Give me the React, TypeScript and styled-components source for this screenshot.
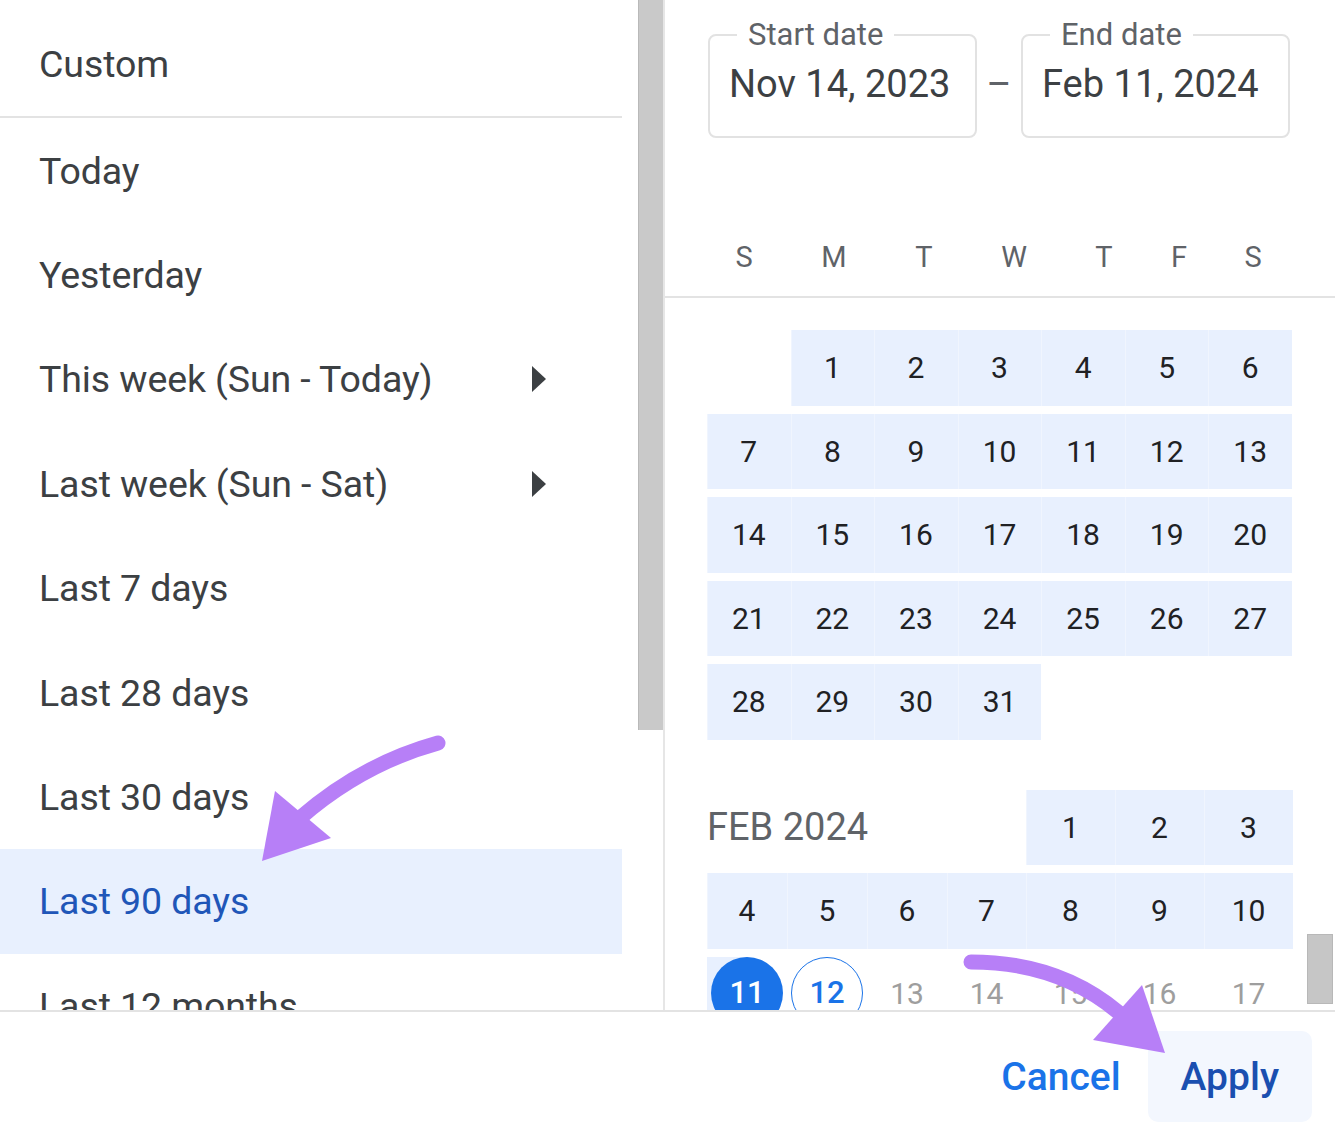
import styled, { createGlobalStyle } from "styled-components";

const GlobalStyle = createGlobalStyle`
    html, body {
        margin: 0;
        padding: 0;
        background: #ffffff;
        font-family: Roboto, "Noto Sans", "Liberation Sans", sans-serif;
    }
`;

type presetType = {
    label: string;
    submenu?: boolean;
    selected?: boolean;
};

const presets: presetType[] = [
    { label: "Today" },
    { label: "Yesterday" },
    { label: "This week (Sun - Today)", submenu: true },
    { label: "Last week (Sun - Sat)", submenu: true },
    { label: "Last 7 days" },
    { label: "Last 28 days" },
    { label: "Last 30 days" },
    { label: "Last 90 days", selected: true },
    { label: "Last 12 months" },
];

const weekdays = ["S", "M", "T", "W", "T", "F", "S"];

const novDays: (number | null)[] = [null];
for (let d = 1; d <= 31; d++) novDays.push(d);

function App() {
    return (
        <Page>
            <GlobalStyle />
            <Main>
                <LeftPanel>
                    <PresetList>
                        <PresetItem>Custom</PresetItem>
                        <Divider />
                        {presets.map((p) => (
                            <PresetItem key={p.label} $selected={p.selected}>
                                {p.label}
                                {p.submenu && <Caret />}
                            </PresetItem>
                        ))}
                    </PresetList>
                    <ScrollTrack>
                        <ScrollThumb $height={730} />
                    </ScrollTrack>
                </LeftPanel>

                <RightPanel>
                    <DateRow>
                        <DateField>
                            <legend>Start date</legend>
                            <DateValue>Nov 14, 2023</DateValue>
                        </DateField>
                        <Dash>–</Dash>
                        <DateField>
                            <legend>End date</legend>
                            <DateValue>Feb 11, 2024</DateValue>
                        </DateField>
                    </DateRow>

                    <WeekHeader>
                        {weekdays.map((w, i) => (
                            <span key={i}>{w}</span>
                        ))}
                    </WeekHeader>

                    <Calendar>
                        <NovGrid>
                            {novDays.map((d, i) =>
                                d === null ? (
                                    <EmptyCell key={i} />
                                ) : (
                                    <DayCell key={i}>{d}</DayCell>
                                )
                            )}
                        </NovGrid>

                        <FebGrid>
                            <MonthLabel>FEB 2024</MonthLabel>
                            {[1, 2, 3, 4, 5, 6, 7, 8, 9, 10].map((d) => (
                                <DayCell key={d}>{d}</DayCell>
                            ))}
                            <RangeEndCell>
                                <Circle $variant="filled">11</Circle>
                            </RangeEndCell>
                            <PlainCell>
                                <Circle $variant="outlined">12</Circle>
                            </PlainCell>
                            {[13, 14, 15, 16, 17].map((d) => (
                                <PlainCell key={d} $muted>
                                    {d}
                                </PlainCell>
                            ))}
                        </FebGrid>
                    </Calendar>

                    <SideThumb />
                </RightPanel>
            </Main>

            <Footer>
                <TextButton>Cancel</TextButton>
                <TextButton $primary>Apply</TextButton>
            </Footer>

            <Annotations viewBox="0 0 1335 1141" width="1335" height="1141">
                <path
                    d="M 438 743 Q 362 764 300 818"
                    fill="none"
                    stroke="#b77ff7"
                    strokeWidth="15"
                    strokeLinecap="round"
                />
                <polygon points="262,861 275,791 331,838" fill="#b77ff7" />
                <path
                    d="M 971 962 Q 1058 962 1118 1012"
                    fill="none"
                    stroke="#b77ff7"
                    strokeWidth="15"
                    strokeLinecap="round"
                />
                <polygon points="1165,1053 1142,985 1093,1040" fill="#b77ff7" />
            </Annotations>
        </Page>
    );
}

const Page = styled.div`
    position: relative;
    width: 1335px;
    height: 1141px;
    overflow: hidden;
    background: #ffffff;
`;

const Main = styled.div`
    display: flex;
    height: 1010px;
    overflow: hidden;
`;

const LeftPanel = styled.div`
    display: flex;
    width: 663px;
    flex-shrink: 0;
    border-right: 2px solid #e6e6e6;
`;

const PresetList = styled.div`
    width: 622px;
    padding-top: 12px;
`;

const PresetItem = styled.div<{ $selected?: boolean }>`
    display: flex;
    align-items: center;
    justify-content: space-between;
    box-sizing: border-box;
    height: 104.4px;
    padding: 0 76px 0 39px;
    font-size: 37.5px;
    letter-spacing: -0.1px;
    color: ${(p) => (p.$selected ? "#1f56b8" : "#3c4043")};
    background: ${(p) => (p.$selected ? "#e8f0fe" : "transparent")};
    white-space: nowrap;
`;

const Divider = styled.div`
    height: 2px;
    background: #e3e3e3;
`;

const Caret = styled.span`
    width: 0;
    height: 0;
    border-top: 13px solid transparent;
    border-bottom: 13px solid transparent;
    border-left: 14px solid #3c4043;
`;

const ScrollTrack = styled.div`
    flex: 1;
    padding-left: 16px;
`;

const ScrollThumb = styled.div<{ $height: number }>`
    width: 24px;
    height: ${(p) => p.$height}px;
    background: #c9c9c9;
    border-left: 1px solid #b9b9b9;
`;

const RightPanel = styled.div`
    position: relative;
    flex: 1;
    overflow: hidden;
`;

const DateRow = styled.div`
    display: flex;
    align-items: flex-start;
    padding: 17px 0 0 43px;
`;

const DateField = styled.fieldset`
    box-sizing: border-box;
    width: 269px;
    margin: 0;
    padding: 0 19px 30px 19px;
    border: 2px solid #e2e2e2;
    border-radius: 8px;

    legend {
        margin-left: 8px;
        padding: 0 11px;
        font-size: 31px;
        line-height: 36px;
        color: #5f6368;
    }
`;

const DateValue = styled.div`
    margin-top: 9px;
    font-size: 38px;
    line-height: 44px;
    color: #3c4043;
    white-space: nowrap;
`;

const Dash = styled.div`
    width: 44px;
    margin-top: 45px;
    text-align: center;
    font-size: 38px;
    line-height: 44px;
    color: #5f6368;
`;

const WeekHeader = styled.div`
    display: grid;
    grid-template-columns: 90px 90px 90px 90px 90px 60px 88px;
    margin-top: 94px;
    padding: 0 0 14px 34px;
    border-bottom: 2px solid #e3e3e3;

    span {
        height: 50px;
        line-height: 50px;
        text-align: center;
        font-size: 29px;
        color: #5f6368;
    }
`;

const Calendar = styled.div`
    padding: 32px 0 0 42px;
`;

const NovGrid = styled.div`
    display: grid;
    width: 585px;
    grid-template-columns: repeat(7, 1fr);
    grid-auto-rows: 75.5px;
    row-gap: 8px;
`;

const FebGrid = styled.div`
    display: grid;
    width: 586px;
    margin-top: 50px;
    grid-template-columns: 80px 80px 80px 79px 89px 89px 89px;
    grid-auto-rows: 75.5px;
    row-gap: 8px;
`;

const EmptyCell = styled.div``;

const DayCell = styled.div`
    display: flex;
    align-items: center;
    justify-content: center;
    background: #e8f0fe;
    box-shadow: inset 1px 0 0 rgba(255, 255, 255, 0.35);
    font-size: 30px;
    color: #202124;
`;

const PlainCell = styled.div<{ $muted?: boolean }>`
    display: flex;
    justify-content: center;
    padding-top: 15px;
    box-sizing: border-box;
    font-size: 30px;
    line-height: 44px;
    color: ${(p) => (p.$muted ? "#9e9e9e" : "#202124")};
`;

const RangeEndCell = styled.div`
    display: flex;
    justify-content: center;
    background: linear-gradient(to right, #e8f0fe 50%, transparent 50%);
`;

const Circle = styled.div<{ $variant: "filled" | "outlined" }>`
    box-sizing: border-box;
    width: 72px;
    height: 72px;
    margin-top: ${(p) => (p.$variant === "outlined" ? "-15px" : "0")};
    border-radius: 50%;
    display: flex;
    align-items: center;
    justify-content: center;
    font-size: 31px;
    font-weight: 500;
    color: ${(p) => (p.$variant === "filled" ? "#ffffff" : "#1a73e8")};
    background: ${(p) => (p.$variant === "filled" ? "#1a73e8" : "transparent")};
    border: ${(p) => (p.$variant === "outlined" ? "1.5px solid #1a73e8" : "none")};
`;

const MonthLabel = styled.div`
    grid-column: 1 / span 4;
    display: flex;
    align-items: center;
    font-size: 38px;
    color: #5f6368;
`;

const SideThumb = styled.div`
    position: absolute;
    right: 2px;
    top: 934px;
    width: 24px;
    height: 68px;
    background: #c6c6c6;
    border: 1px solid #b8b8b8;
`;

const Footer = styled.div`
    display: flex;
    align-items: center;
    justify-content: flex-end;
    gap: 27px;
    box-sizing: border-box;
    height: 131px;
    padding-right: 23px;
    border-top: 2px solid #e3e3e3;
`;

const TextButton = styled.button<{ $primary?: boolean }>`
    height: 91px;
    padding: ${(p) => (p.$primary ? "0 33px" : "0")};
    border: none;
    border-radius: 10px;
    background: ${(p) => (p.$primary ? "#f3f7fe" : "transparent")};
    font-family: Roboto, "Noto Sans", sans-serif;
    font-size: 39px;
    font-weight: 500;
    color: ${(p) => (p.$primary ? "#1a4fb0" : "#1a73e8")};
    cursor: pointer;
`;

const Annotations = styled.svg`
    position: absolute;
    left: 0;
    top: 0;
    pointer-events: none;
`;

export default App;
